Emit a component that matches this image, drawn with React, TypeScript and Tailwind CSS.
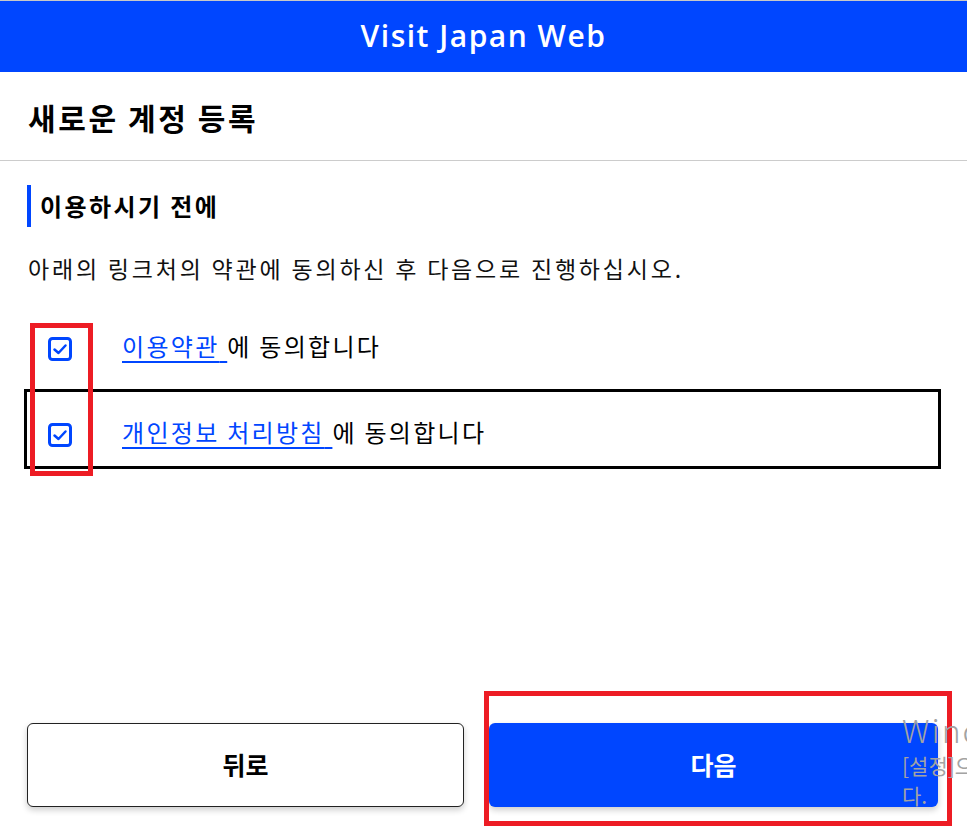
const BLUE = "#0046ff";

function CheckIcon() {
  return (
    <svg width="24" height="24" viewBox="0 0 24 24" fill="none" className="shrink-0">
      <rect x="1.5" y="1.5" width="21" height="21" rx="3" stroke={BLUE} strokeWidth="3" />
      <path d="M6.5 12.5 L10.5 16 L17.5 8.5" stroke={BLUE} strokeWidth="2.5" strokeLinecap="round" strokeLinejoin="round" />
    </svg>
  );
}

function AgreeRow({ link, boxed }: { link: string; boxed?: boolean }) {
  return (
    <label
      className={
        boxed
          ? "flex h-[80px] items-center border-[3px] border-black pl-[21px] pt-[12px]"
          : "flex h-[82px] items-center border-[3px] border-transparent pl-[21px] pt-[2px]"
      }
    >
      <CheckIcon />
      <span className="mb-[6px] ml-[50px] text-[24px] tracking-[2.3px] text-black">
        <a href="#" className="text-[#0046ff] underline underline-offset-[5px]">
          {link}{" "}
        </a>
        에 동의합니다
      </span>
    </label>
  );
}

export default function App() {
  return (
    <div
      className="relative h-[832px] w-[967px] overflow-hidden bg-white"
      style={{ fontFamily: '"Noto Sans CJK KR", "Noto Sans", sans-serif' }}
    >
      <div className="border-t border-[#c8c8c8]" />
      <header className="flex h-[71px] items-center justify-center bg-[#0046ff] pb-[3px]">
        <h1 className="font-['Open_Sans',sans-serif] text-[30px] font-semibold tracking-[1.5px] text-white">
          Visit Japan Web
        </h1>
      </header>

      <div className="flex h-[89px] items-center border-b border-[#cccccc] px-[28px] pt-[2px]">
        <h2 className="text-[30px] font-bold tracking-[2.6px] text-black">새로운 계정 등록</h2>
      </div>

      <section className="px-[24px]">
        <div className="ml-[3px] mt-[24px] flex h-[42px] items-center border-l-4 border-[#0046ff] pl-[9px]">
          <h3 className="text-[24px] font-bold tracking-[2.4px] text-black">이용하시기 전에</h3>
        </div>
        <p className="mt-[26px] pl-[4px] text-[23px] leading-[30px] tracking-[2.8px] text-[#111]">
          아래의 링크처의 약관에 동의하신 후 다음으로 진행하십시오.
        </p>

        <div className="mt-[24px] w-[917px]">
          <AgreeRow link="이용약관" />
          <AgreeRow link="개인정보 처리방침" boxed />
        </div>
      </section>

      <div className="absolute bottom-[25px] left-[27px] flex gap-[25px]">
        <button className="h-[84px] w-[437px] rounded-[6px] border border-[#222] bg-white text-[25px] font-bold text-black shadow-[0_3px_6px_rgba(0,0,0,0.2)]">
          뒤로
        </button>
        <button className="h-[84px] w-[449px] rounded-[6px] bg-[#0046ff] text-[25px] font-bold text-white shadow-[0_3px_6px_rgba(0,0,0,0.2)]">
          다음
        </button>
      </div>

      {/* annotation boxes */}
      <div className="pointer-events-none absolute left-[30px] top-[323px] h-[153px] w-[63px] border-[5px] border-[#ed1c24]" />
      <div className="pointer-events-none absolute left-[484px] top-[691px] h-[135px] w-[468px] border-[5px] border-[#ed1c24]" />

      {/* watermark */}
      <div className="pointer-events-none absolute left-[902px] top-[708px] whitespace-nowrap text-[#a3a3a3]">
        <div className="text-[32px] font-light leading-[42px] tracking-[2px]">Windows 정품 인증</div>
        <div className="text-[21px] leading-[30px]">[설정]으로 이동하여 Windows를 정품 인증합니다</div>
        <div className="text-[21px] leading-[30px]">다.</div>
      </div>
    </div>
  );
}
